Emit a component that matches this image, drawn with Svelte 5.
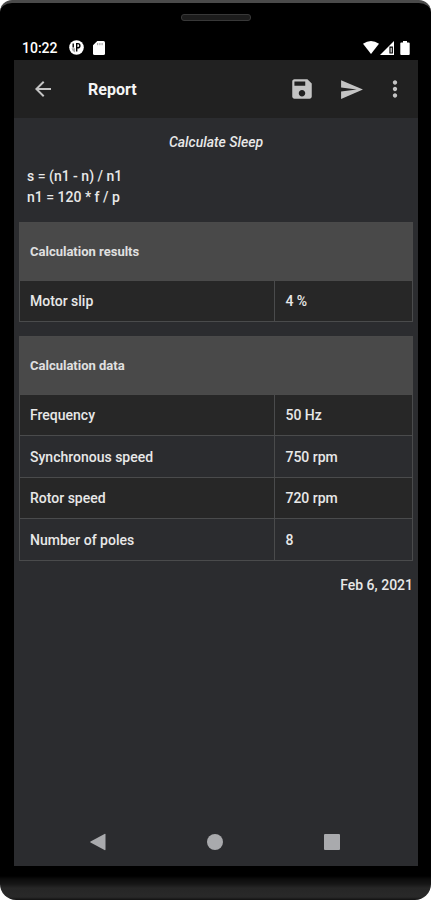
<script>
  const formulas = ['s = (n1 - n) / n1', 'n1 = 120 * f / p'];
  const sections = [
    { title: 'Calculation results', rows: [['Motor slip', '4 %']] },
    {
      title: 'Calculation data',
      rows: [
        ['Frequency', '50 Hz'],
        ['Synchronous speed', '750 rpm'],
        ['Rotor speed', '720 rpm'],
        ['Number of poles', '8'],
      ],
    },
  ];
</script>

<div class="phone">
  <div class="speaker"></div>
  <div class="status">
    <span class="clock">10:22</span>
    <svg width="15" height="15" viewBox="0 0 15 15" aria-hidden="true">
      <circle cx="7.5" cy="7.5" r="7.3" fill="#fff" />
      <path d="M4.200 3.400v4M7.700 11.500V3.600h1.100a2.100 2.100 0 0 1 0 4.200H7.700" fill="none" stroke="#000" stroke-width="1.400" />
      <path d="M2.500 8.200q.6 3.200 3.600 4.300V8.200Z" fill="#000" opacity=".35" />
    </svg>
    <svg class="card" width="12" height="14" viewBox="0 0 12 14" aria-hidden="true">
      <path d="M4.300 0H10.500Q12 0 12 1.500V12.500Q12 14 10.500 14H1.500Q0 14 0 12.500V4.300Z" fill="#fff" />
      <path d="M4.700 2v2.200M6.900 2v2.200M9.100 2v2.200" stroke="#999" stroke-width="1" />
    </svg>
    <span class="spacer"></span>
    <svg width="16" height="13" viewBox="0 0 16 13" aria-hidden="true">
      <path d="M0 2.800Q8-2.600 16 2.800L8 13Z" fill="#fff" />
    </svg>
    <svg width="14" height="14" viewBox="0 0 14 14" aria-hidden="true">
      <path d="M14 0V14H0Z" fill="#fff" />
      <path d="M10 6.200h2.300v5.800H10Z" fill="#fff" stroke="#000" stroke-width="1.200" />
    </svg>
    <svg class="battery" width="10" height="14" viewBox="0 0 10 14" aria-hidden="true">
      <path d="M3 0h4v1.400h1.800q.9 0 .9.900V13q0 1-.9 1H1.200q-.9 0-.9-1V2.300q0-.9.900-.9H3Z" fill="#fff" />
    </svg>
  </div>

  <div class="screen">
    <header>
      <button aria-label="Back">
        <svg width="24" height="24" viewBox="0 0 24 24"><path d="M20 11H7.830l5.590-5.590L12 4l-8 8 8 8 1.410-1.410L7.830 13H20v-2z" /></svg>
      </button>
      <h1>Report</h1>
      <button aria-label="Save">
        <svg width="26" height="26" viewBox="0 0 24 24"><path d="M17 3H5c-1.110 0-2 .9-2 2v14c0 1.100.89 2 2 2h14c1.100 0 2-.9 2-2V7l-4-4zm-5 16c-1.660 0-3-1.340-3-3s1.340-3 3-3 3 1.340 3 3-1.340 3-3 3zm3-10H5V5h10v4z" /></svg>
      </button>
      <button class="send" aria-label="Send">
        <svg width="25" height="25" viewBox="0 0 24 24"><path d="M2.010 21L23 12 2.010 3 2 10l15 2-15 2z" /></svg>
      </button>
      <button class="more" aria-label="More options">
        <svg width="26" height="26" viewBox="0 0 24 24"><path d="M12 8c1.100 0 2-.9 2-2s-.9-2-2-2-2 .9-2 2 .9 2 2 2zm0 2c-1.100 0-2 .9-2 2s.9 2 2 2 2-.9 2-2-.9-2-2-2zm0 6c-1.100 0-2 .9-2 2s.9 2 2 2 2-.9 2-2-.9-2-2-2z" /></svg>
      </button>
    </header>

    <main>
      <h2>Calculate Sleep</h2>
      <div class="formulas">
        {#each formulas as formula}
          <p>{formula}</p>
        {/each}
      </div>
      {#each sections as section}
        <table>
          <colgroup>
            <col class="name" />
            <col />
          </colgroup>
          <thead>
            <tr><th colspan="2">{section.title}</th></tr>
          </thead>
          <tbody>
            {#each section.rows as [name, value]}
              <tr><td>{name}</td><td>{value}</td></tr>
            {/each}
          </tbody>
        </table>
      {/each}
      <p class="date">Feb 6, 2021</p>
    </main>

    <nav>
      <button aria-label="Navigate back">
        <svg width="18" height="18" viewBox="0 0 18 18"><path d="M15.500 1Q16.500.5 16.500 1.600V16.400Q16.500 17.500 15.500 17L1.500 9.500Q.8 9 1.500 8.500Z" /></svg>
      </button>
      <button aria-label="Home">
        <svg width="18" height="18" viewBox="0 0 18 18"><circle cx="9" cy="9" r="8" /></svg>
      </button>
      <button aria-label="Recent apps">
        <svg width="18" height="18" viewBox="0 0 18 18"><rect x="1" y="1" width="16" height="16" rx="1" /></svg>
      </button>
    </nav>
  </div>
</div>

<style>
  :global(body) {
    background: #fff;
  }
  .phone {
    box-sizing: border-box;
    min-height: 100vh;
    display: flex;
    flex-direction: column;
    padding: 11px 13px 34px 14px;
    border-top: 3px solid #4a4a4a;
    border-radius: 12px 12px 16px 16px;
    background: linear-gradient(to top, #111 0, #292929 3px, #262626 12px, #161616 16px, #0c0c0c 21px, #000 24px);
    font-family: Roboto, "Liberation Sans", sans-serif;
    font-size: 14px;
    font-weight: 500;
    color: #e8e8e8;
  }
  .speaker {
    box-sizing: border-box;
    align-self: center;
    width: 70px;
    height: 7px;
    border: 1px solid #383838;
    border-radius: 3px;
    background: #1c1c1c;
  }
  .status {
    box-sizing: border-box;
    display: flex;
    align-items: center;
    gap: 1px;
    height: 39px;
    padding: 14px 8px 0;
    color: #fff;
  }
  .clock {
    margin-right: 10px;
  }
  .card {
    margin-left: 8px;
  }
  .spacer {
    flex: 1;
  }
  .battery {
    margin-left: 5px;
  }
  .screen {
    flex: 1;
    display: flex;
    flex-direction: column;
    background: #2b2c2f;
  }
  header {
    display: flex;
    align-items: center;
    height: 58px;
    padding: 0 10px 0 17px;
    background: #212121;
  }
  button {
    display: flex;
    padding: 0;
    border: 0;
    background: none;
    fill: #c4c4c4;
  }
  h1 {
    flex: 1;
    margin: 0 0 0 33px;
    font-size: 16px;
    font-weight: 700;
    color: #f5f5f5;
  }
  .send {
    margin-left: 24px;
  }
  .more {
    margin-left: 18px;
  }
  main {
    flex: 1;
    padding: 14px 5px 0;
  }
  h2 {
    margin: 0;
    font-size: 14px;
    line-height: 20px;
    font-style: italic;
    font-weight: 500;
    text-align: center;
  }
  .formulas {
    margin: 14px 8px;
  }
  p {
    margin: 0;
    line-height: 21px;
  }
  table {
    width: 100%;
    margin-bottom: 14px;
    border-collapse: collapse;
    table-layout: fixed;
  }
  .name {
    width: 65%;
  }
  th {
    box-sizing: border-box;
    height: 58px;
    padding: 0 10px;
    border: 1px solid #4a4a4a;
    background: #494949;
    font-size: 13px;
    font-weight: 700;
    text-align: left;
    color: #e0e0e0;
  }
  td {
    box-sizing: border-box;
    height: 41px;
    padding: 0 10px;
    border: 1px solid #4a4b4c;
  }
  tr:nth-child(even) td {
    height: 42px;
  }
  tbody tr:nth-child(odd) {
    background: #272727;
  }
  .date {
    text-align: right;
  }
  nav {
    display: flex;
    justify-content: space-between;
    align-items: center;
    height: 48px;
    padding: 0 77px 0 75px;
  }
  nav button {
    fill: #a9aaad;
  }
</style>
